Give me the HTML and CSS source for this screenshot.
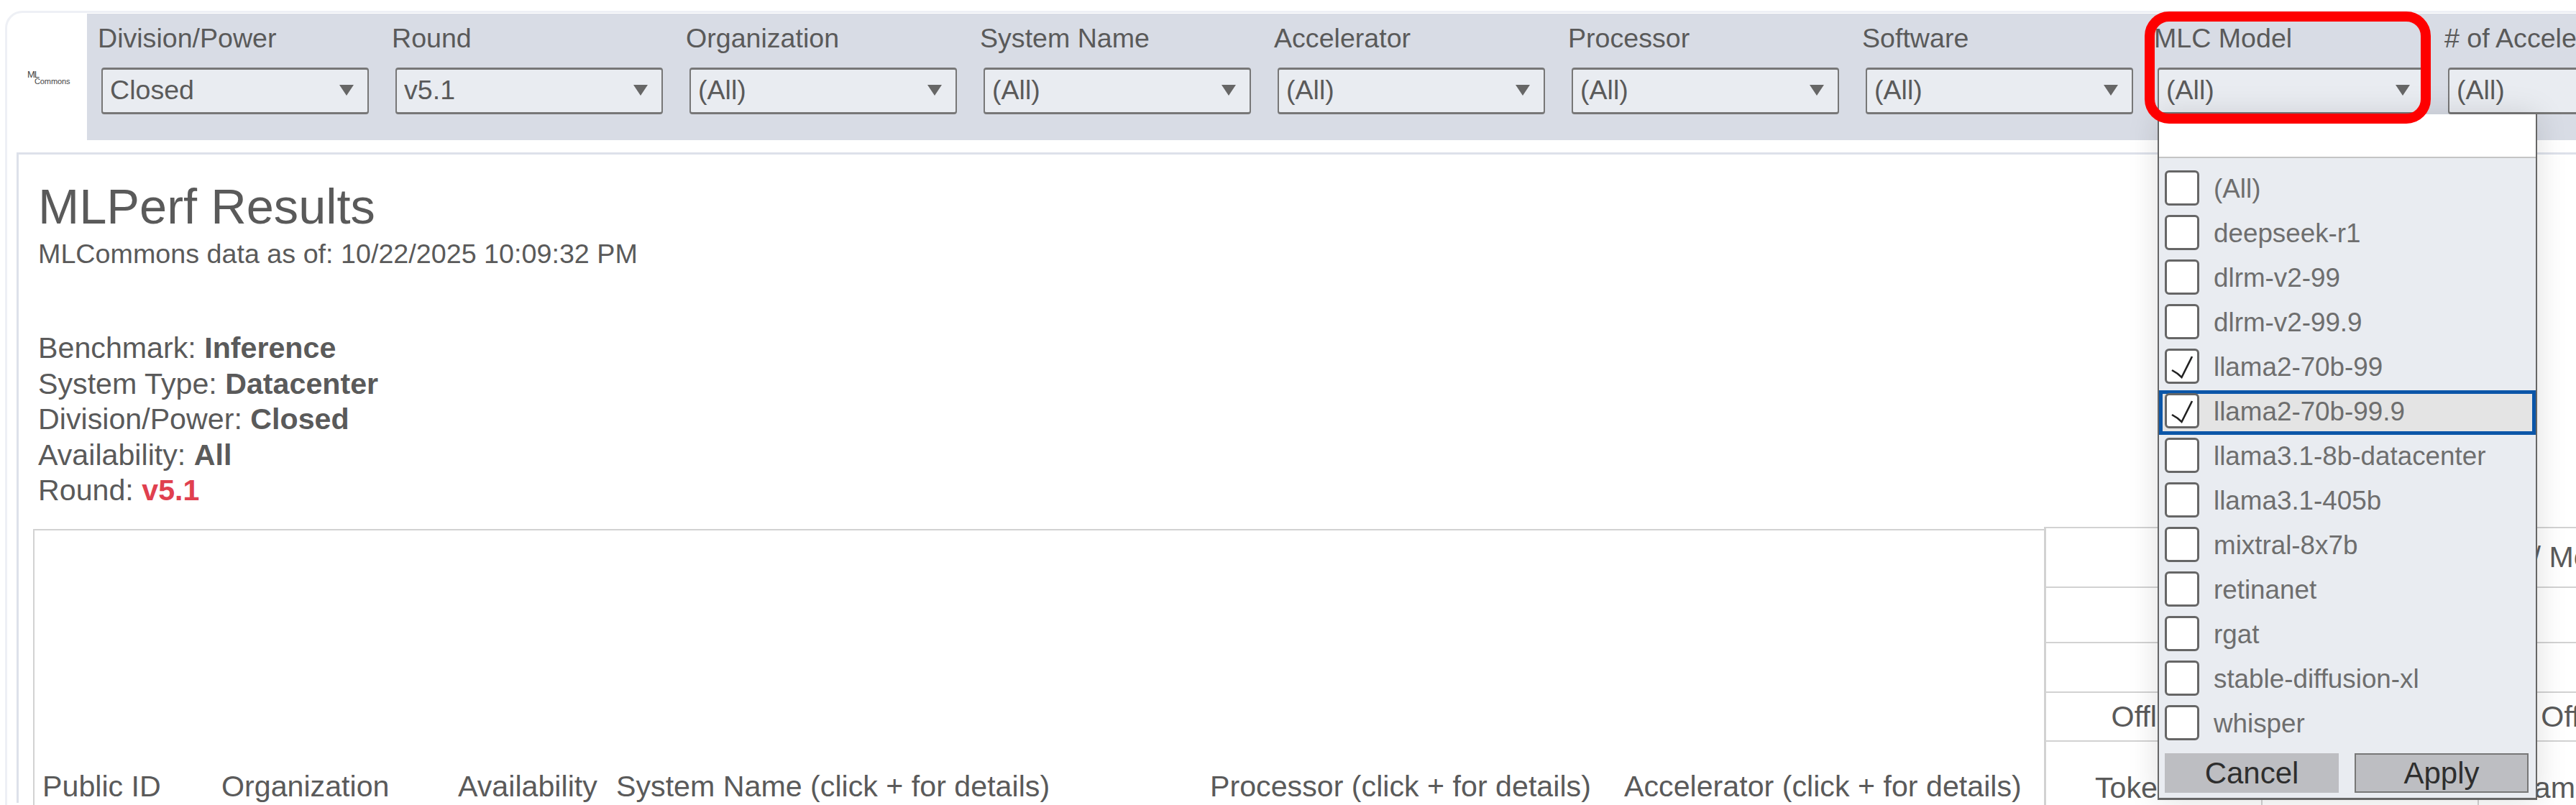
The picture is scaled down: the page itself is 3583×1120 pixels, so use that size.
FILE: index.html
```html
<!DOCTYPE html>
<html lang="en">
<head>
    <meta charset="UTF-8">
    <title>MLPerf Results</title>
    <link rel="stylesheet" href="styles.css">
</head>
<body>
<div id="frame">
    <div class="header">
        <div class="logo">
            <span class="logo-ml">ML</span>
            <span class="logo-commons">Commons</span>
        </div>
        <div class="toolbar">
            <div class="filter">
                <label>Division/Power</label>
                <div class="select">Closed<i class="arrow"></i></div>
            </div>
            <div class="filter">
                <label>Round</label>
                <div class="select">v5.1<i class="arrow"></i></div>
            </div>
            <div class="filter">
                <label>Organization</label>
                <div class="select">(All)<i class="arrow"></i></div>
            </div>
            <div class="filter">
                <label>System Name</label>
                <div class="select">(All)<i class="arrow"></i></div>
            </div>
            <div class="filter">
                <label>Accelerator</label>
                <div class="select">(All)<i class="arrow"></i></div>
            </div>
            <div class="filter">
                <label>Processor</label>
                <div class="select">(All)<i class="arrow"></i></div>
            </div>
            <div class="filter">
                <label>Software</label>
                <div class="select">(All)<i class="arrow"></i></div>
            </div>
            <div class="filter filter-model">
                <label>MLC Model</label>
                <div class="select">(All)<i class="arrow"></i></div>

                <div class="popup">
                    <input class="popup-search" type="text">
                    <ul class="popup-list">
                        <li><span class="box"></span>(All)</li>
                        <li><span class="box"></span>deepseek-r1</li>
                        <li><span class="box"></span>dlrm-v2-99</li>
                        <li><span class="box"></span>dlrm-v2-99.9</li>
                        <li>
                            <span class="box"><svg viewBox="0 0 48 49"><path d="M10 30 L18 35 L23.5 40 L38 11" /></svg></span>llama2-70b-99
                        </li>
                        <li class="focused">
                            <span class="box"><svg viewBox="0 0 48 49"><path d="M10 30 L18 35 L23.5 40 L38 11" /></svg></span>llama2-70b-99.9
                        </li>
                        <li><span class="box"></span>llama3.1-8b-datacenter</li>
                        <li><span class="box"></span>llama3.1-405b</li>
                        <li><span class="box"></span>mixtral-8x7b</li>
                        <li><span class="box"></span>retinanet</li>
                        <li><span class="box"></span>rgat</li>
                        <li><span class="box"></span>stable-diffusion-xl</li>
                        <li><span class="box"></span>whisper</li>
                    </ul>
                    <div class="popup-btns">
                        <button class="btn">Cancel</button>
                        <button class="btn btn-apply">Apply</button>
                    </div>
                </div>
                <div class="highlight"></div>
            </div>
            <div class="filter filter-count">
                <label># of Accelerators</label>
                <div class="select">(All)<i class="arrow"></i></div>
            </div>
        </div>
    </div>

    <div class="panel">
        <div class="report-head">
            <h1>MLPerf Results</h1>
            <p class="asof">MLCommons data as of: 10/22/2025 10:09:32 PM</p>
            <div class="info">
                <div>Benchmark: <b>Inference</b></div>
                <div>System Type: <b>Datacenter</b></div>
                <div>Division/Power: <b>Closed</b></div>
                <div>Availability: <b>All</b></div>
                <div>Round: <b class="red">v5.1</b></div>
            </div>
        </div>

        <div class="crosstab">
            <div class="row-heads">
                <span>Public ID</span>
                <span>Organization</span>
                <span>Availability</span>
                <span>System Name (click + for details)</span>
                <span>Processor (click + for details)</span>
                <span>Accelerator (click + for details)</span>
            </div>
            <table class="col-heads">
                <colgroup>
                    <col class="col-a">
                    <col class="col-b">
                    <col class="col-c">
                </colgroup>
                <tr class="r1"><td colspan="3" class="metric">Metric / Model</td></tr>
                <tr class="r2"><td colspan="3"></td></tr>
                <tr class="r3"><td colspan="3"></td></tr>
                <tr class="r4"><td>Offline</td><td></td><td>Offline</td></tr>
                <tr class="r5"><td class="unit">Tokens/s</td><td class="unit">Watts</td><td class="unit">Samples/s</td></tr>
            </table>
        </div>
    </div>
</div>
</body>
</html>
```

FILE: styles.css
```css
*{
    padding: 0;
    margin: 0;
    box-sizing: border-box;
}
html,body{
    width: 3583px;
    height: 1120px;
    overflow: hidden;
    background-color: white;
}
body{
    font-family: "Liberation Sans", Arial, sans-serif;
    color: #5a5a5a;
}
#frame{
    margin: 15px 0 0 7px;
    border-top: 3px solid #eef0f5;
    border-left: 3px solid #eef0f5;
    border-top-left-radius: 24px;
    height: 1105px;
}
.header{
    display: flex;
    padding-top: 1px;
}

/* logo */
.logo{
    width: 111px;
    flex-shrink: 0;
    display: flex;
    flex-direction: column;
    padding: 79px 0 0 28px;
    color: #444;
}
.logo-ml{
    font-size: 13px;
    line-height: 11px;
    letter-spacing: -1px;
}
.logo-commons{
    font-size: 11px;
    line-height: 9px;
    margin-left: 10px;
    letter-spacing: -0.1px;
    white-space: nowrap;
}

/* filter bar */
.toolbar{
    flex: 1;
    display: flex;
    align-items: flex-start;
    gap: 37px;
    height: 176px;
    padding: 12px 0 0 20px;
    background-color: #d8dce5;
}
.filter{
    position: relative;
    width: 372px;
    flex-shrink: 0;
}
.filter label{
    display: block;
    height: 44px;
    line-height: 44px;
    margin: 0 0 19px -5px;
    font-size: 37.6px;
    white-space: nowrap;
}
.select{
    position: relative;
    height: 65px;
    padding-left: 10px;
    line-height: 57px;
    font-size: 37.6px;
    background-color: #e9ecf1;
    border: 2px solid #777;
    border-top-width: 3px;
    border-bottom-width: 3px;
    border-radius: 4px;
}
.arrow{
    position: absolute;
    right: 19px;
    top: 21px;
    width: 0;
    height: 0;
    border-left: 10px solid transparent;
    border-right: 10px solid transparent;
    border-top: 15px solid #666;
}
.filter-model{
    margin-left: -3px;
}
.filter-count{
    margin-left: -5px;
}

/* dropdown of MLC Model */
.popup{
    position: absolute;
    left: 0;
    top: 100%;
    z-index: 5;
    width: 528px;
    height: 954px;
    background-color: #e9ecf1;
    border: 2px solid #666;
    border-top: 0;
    border-bottom-width: 3px;
    box-shadow: 0 0 40px rgba(0,0,0,0.13);
}
.popup-search{
    display: block;
    width: 100%;
    height: 61px;
    border: 0;
    border-bottom: 2px solid #c4c4c4;
    background-color: white;
}
.popup-list{
    list-style: none;
    padding-top: 13px;
}
.popup-list li{
    display: flex;
    height: 62px;
    padding: 4px 0 0 8px;
    font-size: 36.8px;
    line-height: 51px;
    color: #6e6e6e;
    white-space: nowrap;
}
.popup-list .focused{
    background-color: #e4e4e4;
    box-shadow: inset 0 0 0 5px #0b56a8;
}
.box{
    width: 48px;
    height: 49px;
    margin-right: 20px;
    flex-shrink: 0;
    background-color: white;
    border: 3px solid #666;
    border-radius: 6px;
}
.box svg{
    display: block;
    width: 48px;
    height: 49px;
    margin: -3px 0 0 -3px;
}
.box path{
    fill: none;
    stroke: #222;
    stroke-width: 2.6;
}
.popup-btns{
    display: flex;
    gap: 22px;
    margin: 9px 0 0 8px;
}
.btn{
    width: 242px;
    height: 55px;
    border: 0;
    background-color: #bdbec2;
    font-family: "Liberation Sans", Arial, sans-serif;
    font-size: 42px;
    line-height: 50px;
    color: #2e2e2e;
}
.btn-apply{
    border: 2px solid #777;
}
.highlight{
    position: absolute;
    left: -18px;
    top: -15px;
    z-index: 6;
    width: 398px;
    height: 156px;
    border: 14px solid #fe0000;
    border-radius: 34px;
}

/* report */
.panel{
    margin: 17px 0 0 13px;
    border-top: 3px solid #dde1ea;
    border-left: 3px solid #dde1ea;
    height: 905px;
}
.report-head{
    padding: 34px 0 0 27px;
}
h1{
    font-size: 68.6px;
    font-weight: normal;
    line-height: 78px;
}
.asof{
    margin-top: 3px;
    font-size: 37.7px;
    line-height: 46px;
}
.info{
    margin-top: 84px;
    font-size: 41.2px;
    line-height: 49.5px;
}
.red{
    color: #e0404f;
}

/* table head */
.crosstab{
    display: flex;
    margin: 25.5px 0 0 20px;
    font-size: 41.2px;
}
.row-heads{
    width: 2797px;
    flex-shrink: 0;
    height: 397px;
    margin-top: 3px;
    padding: 0 0 15px 11px;
    display: grid;
    grid-template-columns: 249px 329px 220px 826px 576px 1fr;
    align-items: end;
    line-height: 48px;
    white-space: nowrap;
    border-top: 2px solid #d2d2d2;
    border-left: 2px solid #d2d2d2;
}
.col-heads{
    width: 887px;
    flex-shrink: 0;
    table-layout: fixed;
    border-collapse: collapse;
    border-spacing: 0;
    border-left: 3px solid #d2d2d2;
}
.col-heads td{
    border-top: 2px solid #d2d2d2;
    text-align: center;
    white-space: nowrap;
}
.col-a,.col-b{
    width: 301px;
}
.col-c{
    width: 294px;
}
.r1{
    height: 83px;
}
.r2{
    height: 77px;
}
.r3{
    height: 69px;
}
.r4{
    height: 68px;
}
.r5{
    height: 110px;
}
.col-heads .metric{
    text-align: left;
    padding-left: 553px;
}
.col-heads .unit{
    vertical-align: top;
    padding-top: 41px;
    border-right: 2px solid #d2d2d2;
}
```
